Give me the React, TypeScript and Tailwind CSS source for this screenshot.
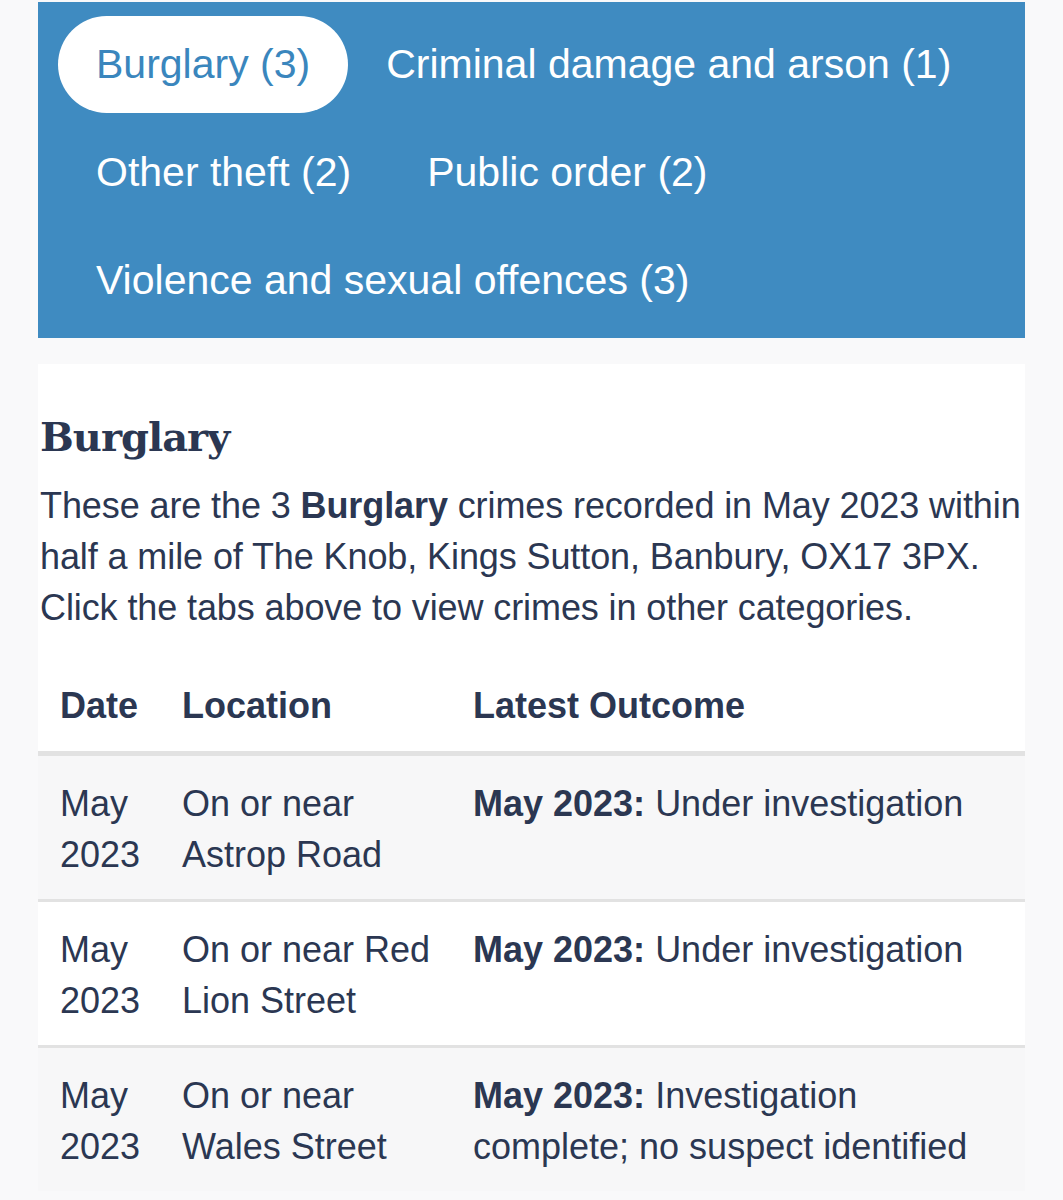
import React, { useState } from 'react';

type Crime = { month: string; location: string; outcomeDate: string; outcome: string };

const TABS = [
  { key: 'burglary', label: 'Burglary (3)' },
  { key: 'damage', label: 'Criminal damage and arson (1)' },
  { key: 'theft', label: 'Other theft (2)' },
  { key: 'public', label: 'Public order (2)' },
  { key: 'violence', label: 'Violence and sexual offences (3)' },
];

const CRIMES: Crime[] = [
  { month: 'May 2023', location: 'On or near Astrop Road', outcomeDate: 'May 2023:', outcome: 'Under investigation' },
  { month: 'May 2023', location: 'On or near Red Lion Street', outcomeDate: 'May 2023:', outcome: 'Under investigation' },
  { month: 'May 2023', location: 'On or near Wales Street', outcomeDate: 'May 2023:', outcome: 'Investigation complete; no suspect identified' },
];

const sans = { fontFamily: '"Liberation Sans", Arial, sans-serif' };

const App: React.FC = () => {
  const [active, setActive] = useState('burglary');

  return (
    <div className="min-h-screen bg-[#f9f9fa] pt-[2px] text-[#2b3752]" style={sans}>
      <div className="mx-[38px]">
        {/* Tabs */}
        <div className="bg-[#3f8bc1] pl-[20px] pr-4 pt-[14px] pb-[9px] flex flex-wrap gap-y-[11px]">
          {TABS.map((t) => (
            <button
              key={t.key}
              onClick={() => setActive(t.key)}
              className={`px-[38px] py-[24px] rounded-full text-[41px] leading-[49px] whitespace-nowrap ${
                active === t.key ? 'bg-white text-[#3a86bd]' : 'text-white'
              }`}
            >
              {t.label}
            </button>
          ))}
        </div>

        {/* Content */}
        <div className="bg-white mt-[26px] px-[2px] pt-[46px]">
          <h2
            className="text-[40px] leading-[53px] font-bold tracking-[-1px] text-[#2b3752]"
            style={{ fontFamily: '"DejaVu Serif", serif' }}
          >
            Burglary
          </h2>
          <p className="mt-[17px] text-[36px] leading-[51px] whitespace-nowrap tracking-[-0.1px]">
            These are the 3 <strong>Burglary</strong> crimes recorded in May 2023 within
            <br />
            half a mile of The Knob, Kings Sutton, Banbury, OX17 3PX.
            <br />
            Click the tabs above to view crimes in other categories.
          </p>
        </div>

        <table className="w-full table-fixed border-collapse bg-white mt-[-1px] text-[36px] leading-[51px]">
          <colgroup>
            <col className="w-[122px]" />
            <col className="w-[291px]" />
            <col />
          </colgroup>
          <thead>
            <tr className="border-b-[5px] border-[#e2e2e2]">
              <th className="text-left font-bold pl-[22px] pr-[12px] pt-[48px] pb-[20px]">Date</th>
              <th className="text-left font-bold pl-[22px] pr-[12px] pt-[48px] pb-[20px]">Location</th>
              <th className="text-left font-bold pl-[22px] pr-[20px] pt-[48px] pb-[20px]">Latest Outcome</th>
            </tr>
          </thead>
          <tbody>
            {CRIMES.map((c, i) => (
              <tr
                key={i}
                className={`${i % 2 === 0 ? 'bg-[#f7f7f8]' : 'bg-white'} ${
                  i < CRIMES.length - 1 ? 'border-b-[3px] border-[#e2e2e2]' : ''
                }`}
              >
                <td className="align-top pl-[22px] pr-[12px] pt-[22px] pb-[19px]">{c.month}</td>
                <td className="align-top pl-[22px] pr-[12px] pt-[22px] pb-[19px]">{c.location}</td>
                <td className="align-top pl-[22px] pr-[20px] pt-[22px] pb-[19px]">
                  <strong>{c.outcomeDate}</strong> {c.outcome}
                </td>
              </tr>
            ))}
          </tbody>
        </table>
      </div>
    </div>
  );
};

export default App;
